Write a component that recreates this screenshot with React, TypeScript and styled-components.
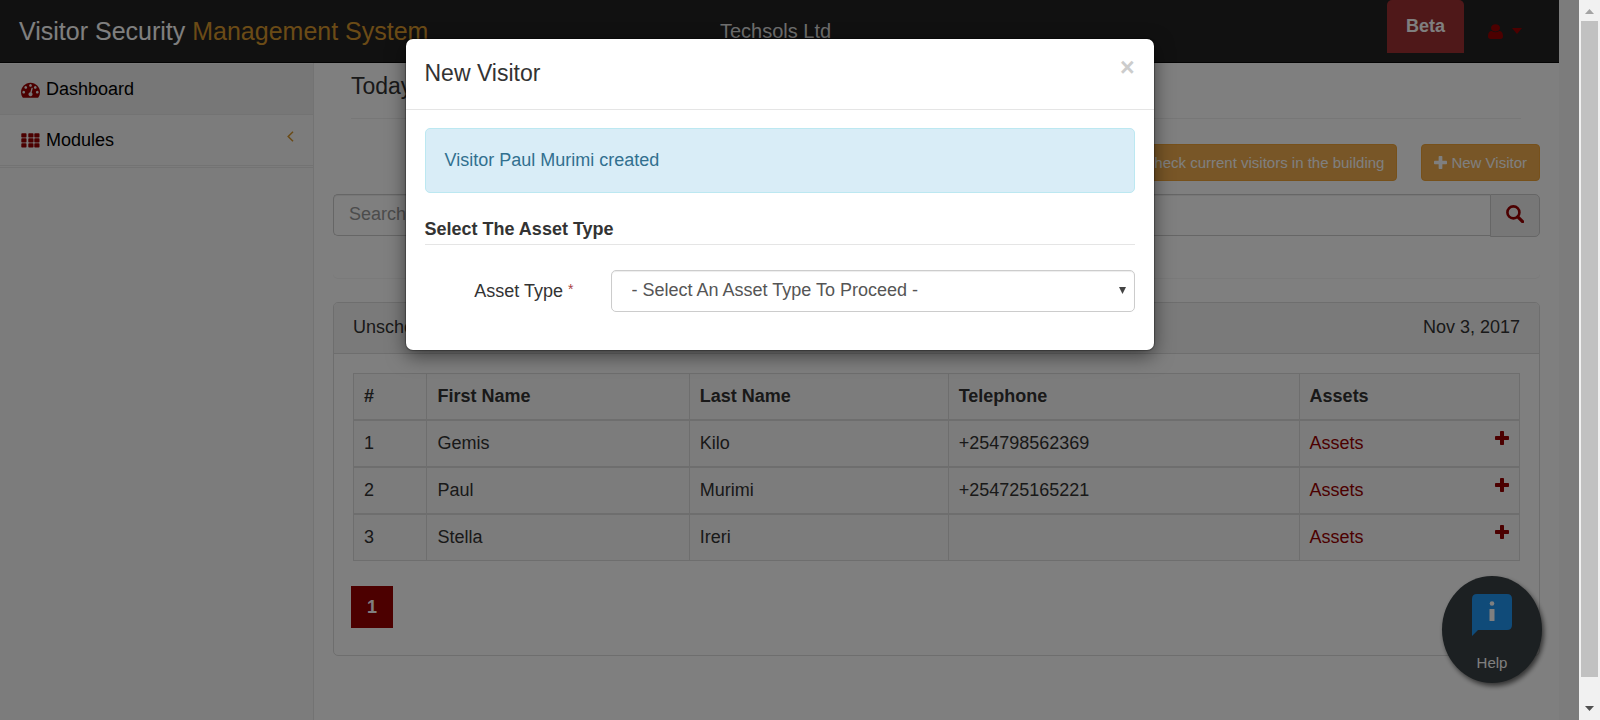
import React from "react";
import styled, { createGlobalStyle } from "styled-components";

const GlobalStyle = createGlobalStyle`
  *, *::before, *::after { box-sizing: border-box; }
  body { margin: 0; }
  body, button, input, select {
    font-family: "Liberation Sans", Arial, Helvetica, sans-serif;
    font-size: 18px;
    line-height: 25px;
    color: #333;
  }
  a { color: #990000; text-decoration: none; }
`;

const Window = styled.div`
  display: flex;
  height: 100vh;
  overflow: hidden;
`;

const Viewport = styled.div`
  position: relative;
  flex: 1;
  min-width: 0;
  display: flex;
  flex-direction: column;
  padding-right: 20px;
  background: #f8f8f8;
`;

const Navbar = styled.header`
  display: grid;
  grid-template-columns: 1fr auto 1fr;
  align-items: center;
  height: 63px;
  padding: 0 27px 0 19px;
  background: #222;
  border-bottom: 1px solid #080808;
`;

const Brand = styled.a`
  font-size: 25px;
  line-height: 30px;
  color: #fff;
  white-space: nowrap;
`;

const BrandAccent = styled.span`
  color: #d6962d;
`;

const Company = styled.div`
  font-size: 20px;
  line-height: 30px;
  color: #ddd;
`;

const NavRight = styled.div`
  display: flex;
  align-self: start;
  justify-content: flex-end;
  gap: 24px;
  padding-right: 10px;
`;

const Beta = styled.span`
  padding: 14px 19px;
  border-radius: 5px 5px 0 0;
  background: #9e3032;
  color: #fff;
  font-weight: bold;
`;

const UserMenu = styled.button`
  display: flex;
  align-items: center;
  gap: 9px;
  margin-top: 8px;
  padding: 0;
  border: 0;
  background: none;
  color: #990000;
`;

const Body = styled.div`
  flex: 1;
  display: flex;
  min-height: 0;
`;

const Sidebar = styled.nav`
  width: 314px;
  flex: none;
  border-right: 1px solid #e7e7e7;
`;

const Menu = styled.ul`
  margin: 0;
  padding: 1px 0;
  list-style: none;
  border-bottom: 1px solid #e7e7e7;
`;

const MenuLink = styled.a<{ $active?: boolean }>`
  display: flex;
  align-items: center;
  gap: 6px;
  height: 51px;
  padding: 0 19px 0 21px;
  border-bottom: 1px solid #e7e7e7;
  background: ${(p) => (p.$active ? "#eee" : "transparent")};
  color: #000;
  svg { color: #990000; }
`;

const Chevron = styled.span`
  display: flex;
  margin-left: auto;
  padding-bottom: 8px;
  && svg { color: #d6962d; }
`;

const Main = styled.main`
  flex: 1;
  min-width: 0;
  padding: 0 19px;
  background: #fff;
`;

const PageTitle = styled.h1`
  margin: 0 19px 0 18px;
  height: 56px;
  padding-top: 10px;
  border-bottom: 1px solid #eee;
  font-size: 23px;
  line-height: 27px;
  font-weight: normal;
`;

const Actions = styled.div`
  display: flex;
  justify-content: flex-end;
  gap: 24px;
  margin: 25px 0 13px;
`;

const ActionButton = styled.button`
  display: flex;
  align-items: center;
  gap: 4px;
  height: 37px;
  padding: 0 12px;
  border: 1px solid #eea236;
  border-radius: 4px;
  background: #f0ad4e;
  color: #fff;
  font-size: 15px;
  line-height: 22px;
`;

const SearchPanel = styled.section`
  height: 84px;
  border-radius: 5px;
  box-shadow: 0 1px 1px rgba(0, 0, 0, 0.05);
`;

const SearchGroup = styled.form`
  display: flex;
  align-items: flex-start;
`;

const SearchInput = styled.input`
  flex: 1;
  height: 42px;
  padding: 0 15px 2px;
  border: 1px solid #ccc;
  border-right: 0;
  border-radius: 5px 0 0 5px;
  background: #fff;
  box-shadow: inset 0 1px 1px rgba(0, 0, 0, 0.075);
  &::placeholder { color: #999; }
`;

const SearchButton = styled.button`
  display: flex;
  align-items: center;
  justify-content: center;
  width: 50px;
  height: 43px;
  padding: 0 0 3px;
  border: 1px solid #ccc;
  border-radius: 0 5px 5px 0;
  background: #eee;
  color: #990000;
`;

const Panel = styled.section`
  margin-top: 24px;
  border: 1px solid #ddd;
  border-radius: 5px;
  padding-bottom: 27px;
`;

const PanelHeader = styled.div`
  display: flex;
  justify-content: space-between;
  padding: 12px 19px 13px;
  border-bottom: 1px solid #ddd;
  background: #f5f5f5;
  border-radius: 4px 4px 0 0;
`;

const VisitorTable = styled.table`
  width: calc(100% - 38px);
  margin: 19px 19px 25px;
  table-layout: fixed;
  border-spacing: 0;
  border: solid #ddd;
  border-width: 1px 1px 0 0;
  background: #f9f9f9;
  th, td {
    height: 47px;
    padding: 0 10px;
    border: solid #ddd;
    border-width: 0 0 2px 1px;
    text-align: left;
  }
  tbody tr:last-child td { height: 46px; border-bottom-width: 1px; }
`;

const AssetCell = styled.div`
  display: flex;
  justify-content: space-between;
`;

const PlusButton = styled.button`
  display: flex;
  padding: 0;
  border: 0;
  background: none;
  color: #990000;
`;

const PageButton = styled.button`
  display: block;
  width: 42px;
  height: 42px;
  margin-left: 17px;
  padding: 0;
  border: 0;
  background: #990000;
  color: #fff;
  font-weight: bold;
`;

const HelpButton = styled.button`
  position: absolute;
  right: 37px;
  bottom: 37px;
  display: flex;
  flex-direction: column;
  align-items: center;
  gap: 16px;
  width: 100px;
  height: 107px;
  padding: 18px 0 0;
  border: 0;
  border-radius: 50%;
  background: #384044;
  box-shadow: 2px 3px 5px rgba(0, 0, 0, 0.6);
  color: #fff;
  font-size: 15px;
  line-height: 22px;
`;

const Backdrop = styled.div`
  position: absolute;
  inset: 0;
  padding: 39px 20px 0 0;
  background: rgba(0, 0, 0, 0.5);
`;

const Dialog = styled.div`
  width: 748px;
  max-width: 100%;
  margin: 0 auto;
  border-radius: 7px;
  background: #fff;
  box-shadow: 0 6px 19px rgba(0, 0, 0, 0.5), 0 0 1px 1px rgba(0, 0, 0, 0.3);
`;

const DialogHeader = styled.div`
  display: flex;
  justify-content: space-between;
  align-items: flex-start;
  padding: 19px;
  height: 71px;
  border-bottom: 1px solid #e5e5e5;
`;

const DialogTitle = styled.h2`
  margin: 0;
  font-size: 23px;
  line-height: 30px;
  font-weight: normal;
`;

const CloseButton = styled.button`
  padding: 0;
  border: 0;
  background: none;
  color: #ccc;
  font-size: 25px;
  line-height: 18px;
  font-weight: bold;
`;

const DialogBody = styled.form`
  padding: 18px 19px 38px;
`;

const Alert = styled.div`
  padding: 19px;
  border: 1px solid #bce8f1;
  border-radius: 5px;
  background: #d9edf7;
  color: #31708f;
`;

const Legend = styled.h3`
  margin: 24px 0 25px;
  padding-bottom: 2px;
  border-bottom: 1px solid #e5e5e5;
  font-size: 18px;
  line-height: 25px;
  font-weight: bold;
`;

const Field = styled.div`
  display: flex;
  align-items: center;
  gap: 37px;
`;

const FieldLabel = styled.label`
  width: 149px;
  text-align: right;
`;

const Required = styled.sup`
  color: #a94442;
  font-size: 14px;
  line-height: 0;
  vertical-align: 3px;
`;

const SelectWrap = styled.div`
  position: relative;
  flex: 1;
`;

const AssetSelect = styled.select`
  display: block;
  width: 100%;
  height: 42px;
  padding: 0 20px 2px;
  appearance: none;
  border: 1px solid #ccc;
  border-radius: 5px;
  background: #fff;
  box-shadow: inset 0 1px 1px rgba(0, 0, 0, 0.075);
  color: #555;
`;

const SelectArrow = styled.svg`
  position: absolute;
  right: 9px;
  top: 17px;
  pointer-events: none;
`;

const Scrollbar = styled.div`
  flex: none;
  display: flex;
  flex-direction: column;
  align-items: center;
  justify-content: space-between;
  width: 21px;
  padding: 9px 2px;
  background: #f1f1f1;
`;

const Thumb = styled.div`
  width: 17px;
  flex: 1;
  margin: 7px 0 29px;
  background: #c1c1c1;
`;

const DashboardIcon = () => (
  <svg width="19" height="19" viewBox="0 0 1792 1792" fill="currentColor">
    <path d="M384 1152q0-53-37.5-90.5t-90.5-37.5-90.5 37.5-37.5 90.5 37.5 90.5 90.5 37.5 90.5-37.5 37.5-90.5zm192-448q0-53-37.5-90.5t-90.5-37.5-90.5 37.5-37.5 90.5 37.5 90.5 90.5 37.5 90.5-37.5 37.5-90.5zm428 481l101-382q6-26-7.5-48.5t-38.5-29.5-48 6.5-30 39.5l-101 382q-60 5-107 43.5t-63 98.5q-20 77 20 146t117 89 146-20 89-117q16-60-6-117t-72-91zm660-33q0-53-37.5-90.5t-90.5-37.5-90.5 37.5-37.5 90.5 37.5 90.5 90.5 37.5 90.5-37.5 37.5-90.5zm-640-640q0-53-37.5-90.5t-90.5-37.5-90.5 37.5-37.5 90.5 37.5 90.5 90.5 37.5 90.5-37.5 37.5-90.5zm448 192q0-53-37.5-90.5t-90.5-37.5-90.5 37.5-37.5 90.5 37.5 90.5 90.5 37.5 90.5-37.5 37.5-90.5zm320 448q0 261-141 483-19 29-54 29h-1402q-35 0-54-29-141-221-141-483 0-182 71-348t191-286 286-191 348-71 348 71 286 191 191 286 71 348z" />
  </svg>
);

const GridIcon = () => (
  <svg width="19" height="15" viewBox="0 0 19 15" fill="currentColor">
    {[0, 5, 10].map((y) =>
      [0, 7, 13].map((x) => <rect key={`${x}-${y}`} x={x + 0.3} y={y + 0.3} width="5.2" height="4.2" rx="0.8" />)
    )}
  </svg>
);

const UserIcon = () => (
  <svg width="15" height="16" viewBox="256 0 1280 1664" fill="currentColor" preserveAspectRatio="none">
    <path d="M1536 1399q0 109-62.5 187t-150.5 78h-854q-88 0-150.5-78t-62.5-187q0-85 8.5-160.5t31.5-152 58.5-131 94-89 134.5-34.5q131 128 313 128t313-128q76 0 134.5 34.5t94 89 58.5 131 31.5 152 8.5 160.5zm-256-887q0 159-112.5 271.5t-271.5 112.5-271.5-112.5-112.5-271.5 112.5-271.5 271.5-112.5 271.5 112.5 112.5 271.5z" />
  </svg>
);

const PlusIcon = ({ size }: { size: number }) => (
  <svg width={size} height={size} viewBox="0 0 14 14" fill="currentColor">
    <rect x="0" y="5" width="14" height="4" rx="0.8" />
    <rect x="5" y="0" width="4" height="14" rx="0.8" />
  </svg>
);

const visitors = [
  { first: "Gemis", last: "Kilo", phone: "+254798562369" },
  { first: "Paul", last: "Murimi", phone: "+254725165221" },
  { first: "Stella", last: "Ireri", phone: "" },
];

export default function App() {
  return (
    <Window>
      <GlobalStyle />
      <Viewport>
        <Navbar>
          <Brand href="#">
            Visitor Security <BrandAccent>Management System</BrandAccent>
          </Brand>
          <Company>Techsols Ltd</Company>
          <NavRight>
            <Beta>Beta</Beta>
            <UserMenu aria-label="Account">
              <UserIcon />
              <svg width="10" height="6" viewBox="0 0 10 6" fill="currentColor">
                <path d="M0 0h10L5 6z" />
              </svg>
            </UserMenu>
          </NavRight>
        </Navbar>
        <Body>
          <Sidebar>
            <Menu>
              <li>
                <MenuLink href="#" $active>
                  <DashboardIcon />
                  Dashboard
                </MenuLink>
              </li>
              <li>
                <MenuLink href="#">
                  <GridIcon />
                  Modules
                  <Chevron>
                    <svg width="7" height="11" viewBox="0 0 7 11" fill="none" stroke="currentColor" strokeWidth="1.5">
                      <path d="M6 0.7L1.2 5.5L6 10.3" />
                    </svg>
                  </Chevron>
                </MenuLink>
              </li>
            </Menu>
          </Sidebar>
          <Main>
            <PageTitle>Today</PageTitle>
            <Actions>
              <ActionButton>Check current visitors in the building</ActionButton>
              <ActionButton>
                <PlusIcon size={13} />
                New Visitor
              </ActionButton>
            </Actions>
            <SearchPanel>
              <SearchGroup>
                <SearchInput placeholder="Search" aria-label="Search" />
                <SearchButton type="button" aria-label="Search visitors">
                  <svg width="18" height="18" viewBox="0 0 18 18" fill="none" stroke="currentColor">
                    <circle cx="7.4" cy="7.4" r="6" strokeWidth="2.6" />
                    <path d="M11.8 11.8L16.6 16.6" strokeWidth="3.2" strokeLinecap="round" />
                  </svg>
                </SearchButton>
              </SearchGroup>
            </SearchPanel>
            <Panel>
              <PanelHeader>
                <span>Unscheduled</span>
                <span>Nov 3, 2017</span>
              </PanelHeader>
              <VisitorTable>
                <colgroup>
                  <col style={{ width: "6.3%" }} />
                  <col style={{ width: "22.5%" }} />
                  <col style={{ width: "22.2%" }} />
                  <col style={{ width: "30.1%" }} />
                  <col />
                </colgroup>
                <thead>
                  <tr>
                    <th>#</th>
                    <th>First Name</th>
                    <th>Last Name</th>
                    <th>Telephone</th>
                    <th>Assets</th>
                  </tr>
                </thead>
                <tbody>
                  {visitors.map((v, i) => (
                    <tr key={v.first}>
                      <td>{i + 1}</td>
                      <td>{v.first}</td>
                      <td>{v.last}</td>
                      <td>{v.phone}</td>
                      <td>
                        <AssetCell>
                          <a href="#">Assets</a>
                          <PlusButton aria-label={`Add asset for ${v.first}`}>
                            <PlusIcon size={14} />
                          </PlusButton>
                        </AssetCell>
                      </td>
                    </tr>
                  ))}
                </tbody>
              </VisitorTable>
              <PageButton>1</PageButton>
            </Panel>
          </Main>
        </Body>
        <HelpButton>
          <svg width="40" height="42" viewBox="0 0 40 42">
            <path d="M5 0H35Q40 0 40 5V31Q40 36 35 36H6L0 42V5Q0 0 5 0Z" fill="#2196f3" />
            <circle cx="20" cy="9.5" r="2.3" fill="#fff" />
            <rect x="17.5" y="15" width="5" height="12" rx="0.6" fill="#fff" />
          </svg>
          Help
        </HelpButton>
        <Backdrop>
          <Dialog role="dialog" aria-labelledby="dialog-title">
            <DialogHeader>
              <DialogTitle id="dialog-title">New Visitor</DialogTitle>
              <CloseButton aria-label="Close">×</CloseButton>
            </DialogHeader>
            <DialogBody>
              <Alert>Visitor Paul Murimi created</Alert>
              <Legend>Select The Asset Type</Legend>
              <Field>
                <FieldLabel htmlFor="asset-type">
                  Asset Type <Required>*</Required>
                </FieldLabel>
                <SelectWrap>
                  <AssetSelect id="asset-type">
                    <option>- Select An Asset Type To Proceed -</option>
                  </AssetSelect>
                  <SelectArrow width="7" height="7" viewBox="0 0 7 7">
                    <path d="M0 0h7L3.5 7z" fill="#444" />
                  </SelectArrow>
                </SelectWrap>
              </Field>
            </DialogBody>
          </Dialog>
        </Backdrop>
      </Viewport>
      <Scrollbar aria-hidden="true">
        <svg width="9" height="5" viewBox="0 0 9 5">
          <path d="M0 5h9L4.500 0z" fill="#a3a3a3" />
        </svg>
        <Thumb />
        <svg width="9" height="5" viewBox="0 0 9 5">
          <path d="M0 0h9L4.500 5z" fill="#505050" />
        </svg>
      </Scrollbar>
    </Window>
  );
}
